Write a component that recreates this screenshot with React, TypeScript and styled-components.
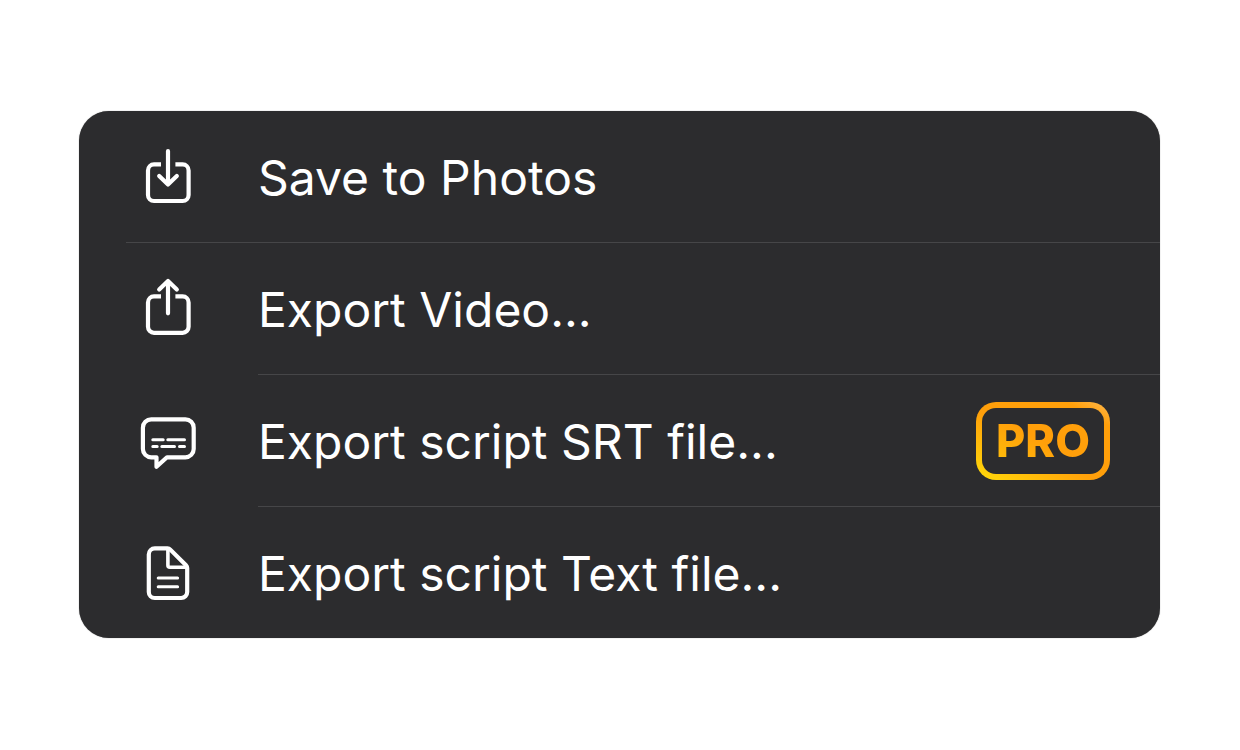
import React from "react";
import styled, { createGlobalStyle } from "styled-components";

const GlobalStyle = createGlobalStyle`
  * { box-sizing: border-box; }
  body {
    margin: 0;
    background: #ffffff;
    font-family: Inter, "Liberation Sans", sans-serif;
  }
`;

const Page = styled.main`
  min-height: 100vh;
  padding: 111px 80px 111px 79px;
`;

const Menu = styled.ul`
  margin: 0;
  padding: 0;
  list-style: none;
  color: #ffffff;
  background: #2c2c2e;
  border-radius: 30px;
  overflow: hidden;
  box-shadow: 0 0 1px #777777;
`;

const Item = styled.li`
  display: flex;
`;

type Divider = "none" | "wide" | "text";

const Action = styled.button`
  flex: 1;
  display: grid;
  grid-template-columns: 132px 1fr;
  align-items: stretch;
  margin: 0 0 0 47px;
  padding: 0;
  border: 0;
  background: none;
  color: inherit;
  font: inherit;
  text-align: left;
  cursor: pointer;
`;

const IconCell = styled.span<{ $divider: Divider }>`
  box-sizing: content-box;
  display: flex;
  align-items: center;
  height: 131px;
  padding-left: 10px;
  border-bottom: ${(p) => (p.$divider === "none" ? 0 : "1px solid")};
  border-color: ${(p) => (p.$divider === "wide" ? "#464648" : "transparent")};
`;

const Icon = styled.svg`
  width: 64px;
  height: 65px;
  fill: none;
  stroke: #ffffff;
  stroke-width: 4.2;
  stroke-linecap: round;
  stroke-linejoin: round;
`;

const Content = styled.span<{ $divider: Divider }>`
  display: flex;
  align-items: center;
  justify-content: space-between;
  padding-right: 50px;
  border-bottom: ${(p) => (p.$divider === "none" ? 0 : "1px solid #464648")};
`;

const Label = styled.span`
  padding-top: 2px;
  font-size: 48px;
  line-height: 60px;
  white-space: nowrap;
`;

const gradient =
  "linear-gradient(30deg, #ffd60a 4%, #ff9f0a 45%, #ff9f0a 84%, #ffb340 96%)";

const Badge = styled.span`
  display: flex;
  align-items: center;
  justify-content: center;
  width: 134px;
  height: 78px;
  border: 6px solid transparent;
  border-radius: 20px;
  background: linear-gradient(#2c2c2e, #2c2c2e) padding-box, ${gradient} border-box;
`;

const BadgeText = styled.span`
  font-size: 45px;
  font-weight: 800;
  line-height: 54px;
  color: transparent;
  background: linear-gradient(30deg, #ffc20a 0%, #ff9f0a 50%);
  background-clip: text;
  -webkit-background-clip: text;
`;

const SaveIcon = () => (
  <Icon viewBox="0 0 64 65" aria-hidden="true">
    <path strokeLinecap="butt" d="M25 20.4H18a6 6 0 0 0-6 6V51a6 6 0 0 0 6 6h28.6a6 6 0 0 0 6-6V26.4a6 6 0 0 0-6-6h-7.2" />
    <path d="M32 7.2V40M23.2 32l8.8 8.6 8.8-8.6" />
  </Icon>
);

const ShareIcon = () => (
  <Icon viewBox="0 0 64 65" aria-hidden="true">
    <path strokeLinecap="butt" d="M25 20.4H18a6 6 0 0 0-6 6V50.8a6 6 0 0 0 6 6h28.6a6 6 0 0 0 6-6V26.4a6 6 0 0 0-6-6h-7.2" />
    <path d="M32 37.3V5.4M23.2 13.6l8.8-8.6 8.8 8.6" />
  </Icon>
);

const CaptionIcon = () => (
  <Icon viewBox="0 0 64 65" aria-hidden="true">
    <path d="M15.2 11.4h34.2a8.3 8.3 0 0 1 8.3 8.3v21.3a8.3 8.3 0 0 1-8.3 8.3H31L20.5 58.8V49.3h-5.3a8.3 8.3 0 0 1-8.3-8.3V19.7a8.3 8.3 0 0 1 8.3-8.3Z" />
    <path strokeWidth="3" d="M16.8 31.7h10.4M31.8 31.7h16.7M16.8 38.4h4.4M25.8 38.4h12.7M43.5 38.4h5" />
  </Icon>
);

const DocumentIcon = () => (
  <Icon viewBox="0 0 64 65" aria-hidden="true">
    <path d="M18.8 8.4H31.5a4 4 0 0 1 2.8 1.2L50 25.3a4 4 0 0 1 1.2 2.8V52a6 6 0 0 1-6 6H18.8a6 6 0 0 1-6-6V14.4a6 6 0 0 1 6-6Z" />
    <path strokeWidth="3.6" d="M31.9 9V25.3a2 2 0 0 0 2 2H50.5" />
    <path strokeWidth="3" d="M22.2 38h19.4M22.2 46.7h19.4" />
  </Icon>
);

type Entry = {
  label: string;
  icon: () => React.JSX.Element;
  divider: Divider;
  pro?: boolean;
};

const entries: Entry[] = [
  { label: "Save to Photos", icon: SaveIcon, divider: "wide" },
  { label: "Export Video...", icon: ShareIcon, divider: "text" },
  { label: "Export script SRT file...", icon: CaptionIcon, divider: "text", pro: true },
  { label: "Export script Text file...", icon: DocumentIcon, divider: "none" },
];

export default function App() {
  return (
    <>
      <GlobalStyle />
      <Page>
        <Menu>
          {entries.map(({ label, icon: Glyph, divider, pro }) => (
            <Item key={label}>
              <Action type="button">
                <IconCell $divider={divider}>
                  <Glyph />
                </IconCell>
                <Content $divider={divider}>
                  <Label>{label}</Label>
                  {pro && (
                    <Badge>
                      <BadgeText>PRO</BadgeText>
                    </Badge>
                  )}
                </Content>
              </Action>
            </Item>
          ))}
        </Menu>
      </Page>
    </>
  );
}
